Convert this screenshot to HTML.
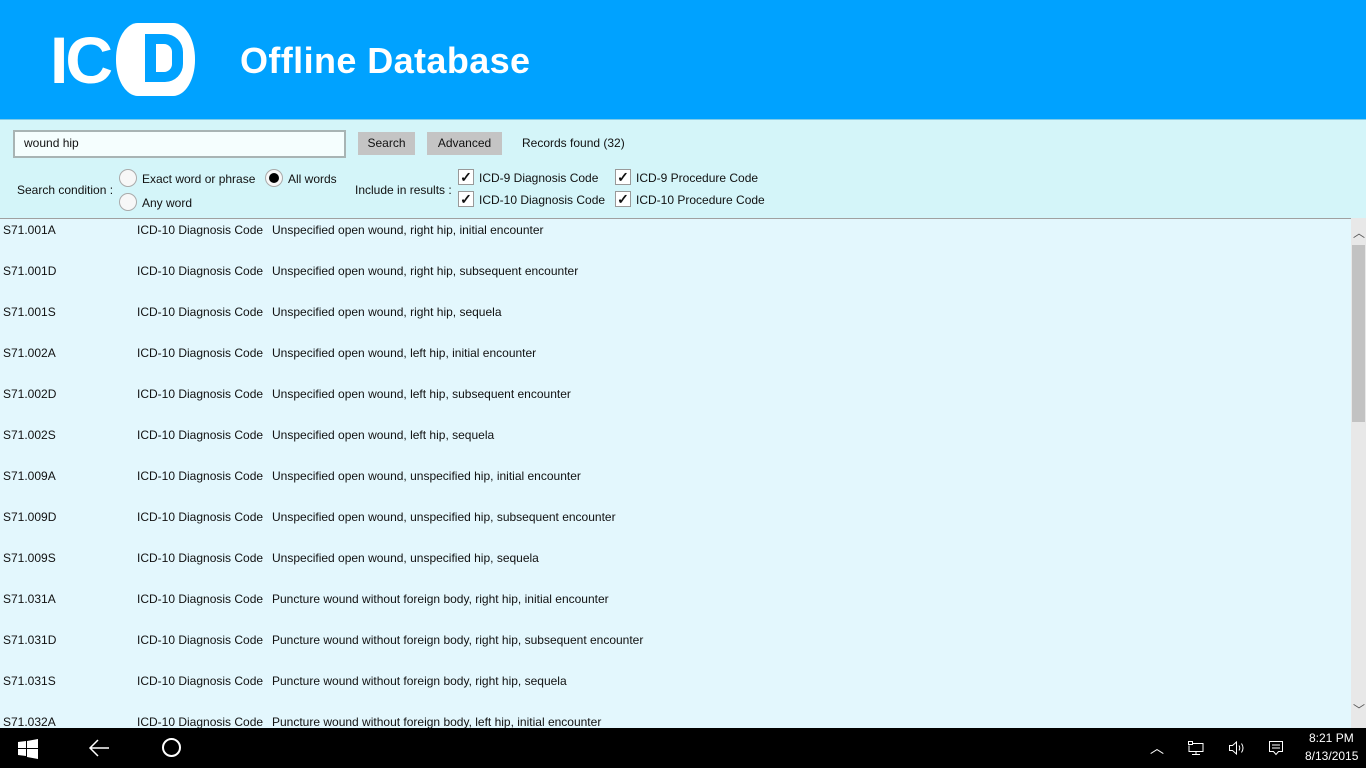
<!DOCTYPE html><html><head><style>
body{margin:0;width:1366px;height:768px;overflow:hidden;font-family:"Liberation Sans",sans-serif;background:#e3f7fd;position:relative;font-size:12px;color:#111}
.hdr{position:absolute;left:0;top:0;width:1366px;height:119px;background:#00a2ff}
.pan{position:absolute;left:0;top:119px;width:1366px;height:98px;background:#d4f5f9;border-top:1px solid #7fcbe8;border-bottom:1px solid #a0a0a0}
.a{position:absolute;white-space:nowrap}
.btn{position:absolute;background:#c4c4c4;text-align:center;line-height:23px;font-size:12px}
.rad{position:absolute;width:16px;height:16px;border:1px solid #aaa;border-radius:50%;background:#f7f7f7}
.chk{position:absolute;width:14px;height:14px;border:1px solid #999;background:#fff;font-size:14px;line-height:14px;text-align:center;font-weight:bold}
.row{position:absolute;left:0;height:20px;font-size:12px}
.row span{position:absolute;white-space:nowrap}
.tb{position:absolute;left:0;top:728px;width:1366px;height:40px;background:#000;color:#fff}
</style></head><body>
<div class="hdr">
<div class="a" style="left:50px;top:22px;font-size:66px;font-weight:bold;color:#fff;letter-spacing:-3px">IC</div>
<div class="a" style="left:116px;top:23px;width:79px;height:73px;background:#fff;border-radius:22px/36px"></div>
<div class="a" style="left:145px;top:34px;width:38px;height:48px;background:#00a2ff;border-radius:0 18px 18px 0"></div>
<div class="a" style="left:156px;top:44px;width:16px;height:28px;background:#fff;border-radius:0 8px 8px 0"></div>
<div class="a" style="left:240px;top:40px;font-size:36px;font-weight:bold;color:#fff;letter-spacing:0.4px">Offline Database</div>
</div>
<div class="pan">
<div class="a" style="left:13px;top:10px;width:329px;height:24px;border:2px solid #a8b4b4;background:#f5fefe"></div>
<div class="a" style="left:24px;top:16px">wound hip</div>
<div class="btn" style="left:358px;top:12px;width:57px">Search</div>
<div class="btn" style="left:427px;top:12px;width:75px">Advanced</div>
<div class="a" style="left:522px;top:16px">Records found (32)</div>
<div class="a" style="left:17px;top:63px">Search condition :</div>
<div class="rad" style="left:119px;top:49px"></div><div class="a" style="left:142px;top:52px">Exact word or phrase</div>
<div class="rad" style="left:119px;top:73px"></div><div class="a" style="left:142px;top:76px">Any word</div>
<div class="rad" style="left:265px;top:49px"></div><div class="a" style="left:269px;top:53px;width:10px;height:10px;border-radius:50%;background:#000"></div><div class="a" style="left:288px;top:52px">All words</div>
<div class="a" style="left:355px;top:63px">Include in results :</div>
<div class="chk" style="left:458px;top:49px">✓</div><div class="a" style="left:479px;top:51px">ICD-9 Diagnosis Code</div>
<div class="chk" style="left:458px;top:71px">✓</div><div class="a" style="left:479px;top:73px">ICD-10 Diagnosis Code</div>
<div class="chk" style="left:615px;top:49px">✓</div><div class="a" style="left:636px;top:51px">ICD-9 Procedure Code</div>
<div class="chk" style="left:615px;top:71px">✓</div><div class="a" style="left:636px;top:73px">ICD-10 Procedure Code</div>
</div>
<div class="a" style="left:1351px;top:218px;width:15px;height:510px;background:#e8e8e8"></div>
<div class="a" style="left:1352px;top:245px;width:13px;height:177px;background:#c2c2c2"></div>
<div class="a" style="left:1353px;top:224px;font-size:12px;color:#555">︿</div>
<div class="a" style="left:1353px;top:701px;font-size:12px;color:#555">﹀</div>
<div class="row" style="top:223px"><span style="left:3px">S71.001A</span><span style="left:137px">ICD-10 Diagnosis Code</span><span style="left:272px">Unspecified open wound, right hip, initial encounter</span></div>
<div class="row" style="top:264px"><span style="left:3px">S71.001D</span><span style="left:137px">ICD-10 Diagnosis Code</span><span style="left:272px">Unspecified open wound, right hip, subsequent encounter</span></div>
<div class="row" style="top:305px"><span style="left:3px">S71.001S</span><span style="left:137px">ICD-10 Diagnosis Code</span><span style="left:272px">Unspecified open wound, right hip, sequela</span></div>
<div class="row" style="top:346px"><span style="left:3px">S71.002A</span><span style="left:137px">ICD-10 Diagnosis Code</span><span style="left:272px">Unspecified open wound, left hip, initial encounter</span></div>
<div class="row" style="top:387px"><span style="left:3px">S71.002D</span><span style="left:137px">ICD-10 Diagnosis Code</span><span style="left:272px">Unspecified open wound, left hip, subsequent encounter</span></div>
<div class="row" style="top:428px"><span style="left:3px">S71.002S</span><span style="left:137px">ICD-10 Diagnosis Code</span><span style="left:272px">Unspecified open wound, left hip, sequela</span></div>
<div class="row" style="top:469px"><span style="left:3px">S71.009A</span><span style="left:137px">ICD-10 Diagnosis Code</span><span style="left:272px">Unspecified open wound, unspecified hip, initial encounter</span></div>
<div class="row" style="top:510px"><span style="left:3px">S71.009D</span><span style="left:137px">ICD-10 Diagnosis Code</span><span style="left:272px">Unspecified open wound, unspecified hip, subsequent encounter</span></div>
<div class="row" style="top:551px"><span style="left:3px">S71.009S</span><span style="left:137px">ICD-10 Diagnosis Code</span><span style="left:272px">Unspecified open wound, unspecified hip, sequela</span></div>
<div class="row" style="top:592px"><span style="left:3px">S71.031A</span><span style="left:137px">ICD-10 Diagnosis Code</span><span style="left:272px">Puncture wound without foreign body, right hip, initial encounter</span></div>
<div class="row" style="top:633px"><span style="left:3px">S71.031D</span><span style="left:137px">ICD-10 Diagnosis Code</span><span style="left:272px">Puncture wound without foreign body, right hip, subsequent encounter</span></div>
<div class="row" style="top:674px"><span style="left:3px">S71.031S</span><span style="left:137px">ICD-10 Diagnosis Code</span><span style="left:272px">Puncture wound without foreign body, right hip, sequela</span></div>
<div class="row" style="top:715px"><span style="left:3px">S71.032A</span><span style="left:137px">ICD-10 Diagnosis Code</span><span style="left:272px">Puncture wound without foreign body, left hip, initial encounter</span></div>
<div class="tb">
<svg class="a" style="left:18px;top:11px" width="20" height="20" viewBox="0 0 20 20" fill="#fff"><path d="M0 3l8-1v7H0zM9 2l11-2v9H9zM0 10h8v7l-8-1zM9 10h11v10l-11-2z"/></svg>
<svg class="a" style="left:88px;top:10px" width="22" height="20" viewBox="0 0 22 20" stroke="#fff" fill="none" stroke-width="1.5"><path d="M21 10H2M10 2L2 10l8 8"/></svg>
<div class="a" style="left:162px;top:10px;width:15px;height:15px;border:2px solid #fff;border-radius:50%"></div>
<div class="a" style="left:1150px;top:10px;font-size:14px">︿</div>
<svg class="a" style="left:1187px;top:12px" width="18" height="16" viewBox="0 0 18 16" stroke="#fff" fill="none"><path d="M1.5 1.5h4v3h-4zM5 3.5h11v8H2v-6M9 11.5v3M5 14.5h8"/></svg>
<svg class="a" style="left:1228px;top:12px" width="18" height="16" viewBox="0 0 18 16" stroke="#fff" fill="none"><path d="M1.5 5.5h3l4-3.5v12l-4-3.5h-3zM11 5.5q1.5 2.5 0 5M13.5 3.5q3 4.5 0 9"/></svg>
<svg class="a" style="left:1268px;top:12px" width="16" height="16" viewBox="0 0 16 16" stroke="#fff" fill="none"><path d="M1.5 1.5h13v10h-4l-2.5 3-2.5-3h-4zM4 5h8M4 8h8"/></svg>
<div class="a" style="left:1309px;top:3px;font-size:12px">8:21 PM</div>
<div class="a" style="left:1305px;top:21px;font-size:12px">8/13/2015</div>
</div>
</body></html>
